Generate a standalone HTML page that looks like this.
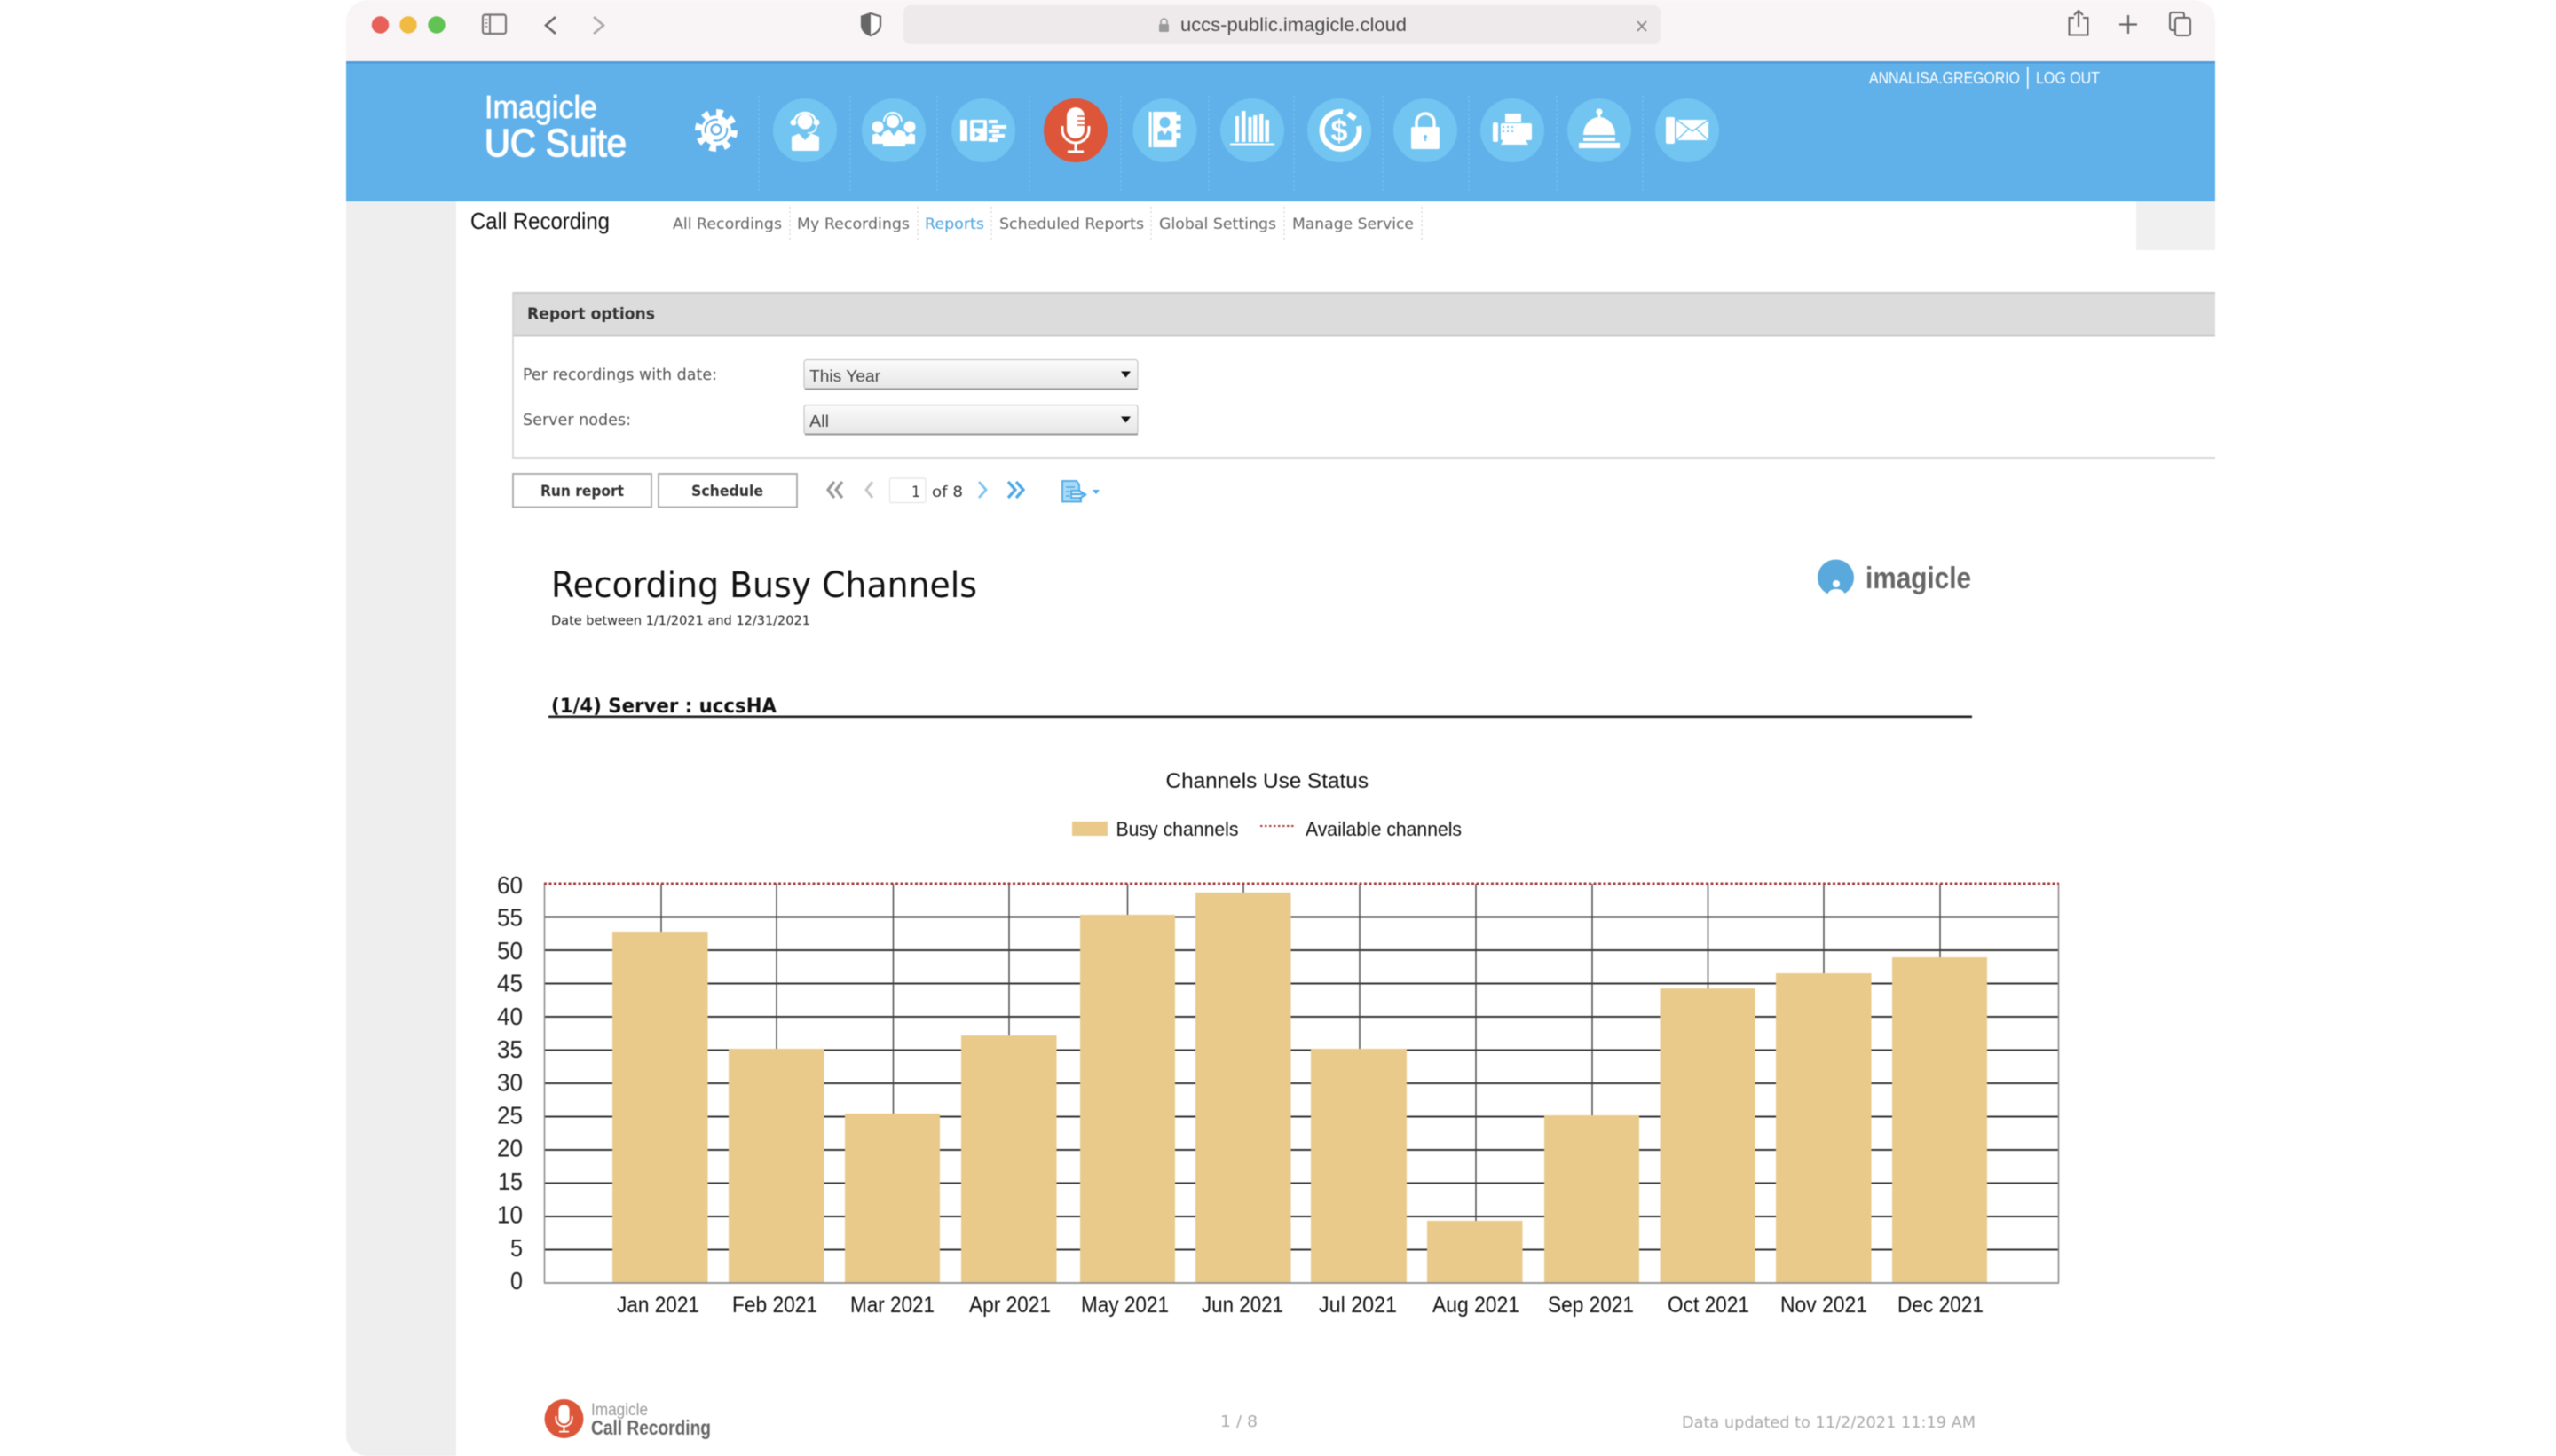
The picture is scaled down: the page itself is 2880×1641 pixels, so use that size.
<!DOCTYPE html>
<html><head><meta charset="utf-8"><title>Call Recording</title>
<style>
html,body{margin:0;padding:0;background:#fff;width:2880px;height:1641px;overflow:hidden}
svg{display:block;filter:blur(.55px)}
.l{font-family:"Liberation Sans",Arial,sans-serif}
.d{font-family:"DejaVu Sans",Verdana,sans-serif}
</style></head><body>
<svg width="2880" height="1641" viewBox="0 0 2880 1641" xmlns="http://www.w3.org/2000/svg">
<defs>
<clipPath id="win"><rect x="390" y="0" width="2106" height="1641" rx="24"/></clipPath>
<linearGradient id="sel" x1="0" y1="0" x2="0" y2="1"><stop offset="0" stop-color="#fbfbfb"/><stop offset="1" stop-color="#e6e6e6"/></linearGradient>
</defs>
<g clip-path="url(#win)">
<rect x="390" y="0" width="2106" height="1641" fill="#fff"/>
<rect x="390" y="0" width="2106" height="69" fill="#f9f5f6"/>
<rect x="390" y="69" width="2106" height="158" fill="#60b1ea"/>
<rect x="390" y="69" width="2106" height="2.5" fill="#5198d6"/>
<rect x="390" y="227" width="124" height="1414" fill="#eeeeee"/>
<rect x="2407" y="227" width="89" height="55" fill="#f0f0f0"/>
</g>

<!-- browser chrome -->
<circle cx="428.5" cy="28" r="9.7" fill="#e8605a"/>
<circle cx="460" cy="28" r="9.7" fill="#efbb40"/>
<circle cx="492" cy="28" r="9.7" fill="#60c354"/>
<rect x="544" y="16.5" width="26" height="21.5" rx="2.5" fill="none" stroke="#777" stroke-width="2.2"/>
<path d="M552 17V38" stroke="#777" stroke-width="2"/>
<path d="M546.5 22h3M546.5 26h3M546.5 30h3" stroke="#888" stroke-width="1.6"/>
<path d="M626 19 L615 28.5 L626 38" fill="none" stroke="#666" stroke-width="2.6"/>
<path d="M669 19 L680 28.5 L669 38" fill="none" stroke="#aaa" stroke-width="2.6"/>
<path d="M981 15 L992 18.5 V28 Q992 36 981 40 Q971 36 971 28 V18.5 Z" fill="#fff" stroke="#666" stroke-width="2.2"/>
<path d="M981 15 L971 18.5 V28 Q971 36 981 40 Z" fill="#666"/>
<rect x="1018" y="6" width="853" height="44" rx="8" fill="#eeeaec"/>
<rect x="1306" y="27" width="11" height="9" rx="1.5" fill="#9a9a9a"/>
<path d="M1308 27v-2.5a3.5 3.5 0 0 1 7 0V27" fill="none" stroke="#9a9a9a" stroke-width="1.6"/>
<text class="l" x="1330" y="35" font-size="21" fill="#4a4a4a" textLength="255" lengthAdjust="spacingAndGlyphs">uccs-public.imagicle.cloud</text>
<path d="M1845 24 L1855 35 M1855 24 L1845 35" stroke="#888" stroke-width="1.8"/>
<path d="M2337 20h-5.5v19.5h21V20H2347" fill="none" stroke="#666" stroke-width="2"/>
<path d="M2342 30V12 M2337 17l5-5 5 5" fill="none" stroke="#666" stroke-width="2"/>
<path d="M2398 17V38 M2388 27.500h20" stroke="#666" stroke-width="2.2"/>
<rect x="2445" y="14" width="16" height="20" rx="2.500" fill="none" stroke="#666" stroke-width="2"/>
<rect x="2451" y="20" width="17" height="20" rx="2.500" fill="#f9f5f6" stroke="#666" stroke-width="2"/>

<!-- header -->
<text class="l" x="546" y="133" font-size="36" fill="#fff" stroke="#fff" stroke-width=".7" textLength="127" lengthAdjust="spacingAndGlyphs">Imagicle</text>
<text class="l" x="546" y="176" font-size="44" fill="#fff" stroke="#fff" stroke-width="1.500" textLength="160" lengthAdjust="spacingAndGlyphs">UC Suite</text>
<text class="l" x="2106" y="94" font-size="18" fill="#fff" textLength="170" lengthAdjust="spacingAndGlyphs">ANNALISA.GREGORIO</text>
<rect x="2284" y="75" width="1.6" height="25" fill="#fff"/>
<text class="l" x="2294" y="94" font-size="18" fill="#fff" textLength="72" lengthAdjust="spacingAndGlyphs">LOG OUT</text>

<path d="M855 108V215M958 108V215M1056 108V215M1160 108V215M1263 108V215M1362 108V215M1458 108V215M1558 108V215M1655 108V215M1754 108V215M1851 108V215" stroke="#86c4ee" stroke-width="1" stroke-dasharray="2 3"/>

<!-- gear -->
<g transform="translate(807 147)">
<circle r="17" fill="#fff"/>
<circle r="20" fill="none" stroke="#fff" stroke-width="8" stroke-dasharray="7.300 8.400"/>
<circle r="5.500" cx="0" cy="-1" fill="none" stroke="#60b1ea" stroke-width="2.200"/>
<path d="M-12 3 A12 12 0 0 1 2 -12 M12 -3 A12 12 0 0 1 -3 11" fill="none" stroke="#60b1ea" stroke-width="2"/>
</g>
<!-- agent -->
<g transform="translate(907 147)">
<circle r="36" fill="#72c5f0"/>
<g fill="#fff">
<circle cy="-10" r="8.500"/>
<path d="M-12 -9 a12 11 0 0 1 24 0" fill="none" stroke="#fff" stroke-width="2.500"/>
<circle cx="-13" cy="-9" r="3.500"/><circle cx="13" cy="-9" r="3.500"/>
<path d="M13 -6 q0 9 -10 9" fill="none" stroke="#fff" stroke-width="1.500"/>
<path d="M-15 7 L-7 3.500 L0 11 L7 3.500 L16 7 V21 Q16 23 14 23 H-13 Q-15 23 -15 21Z"/>
</g></g>
<!-- team -->
<g transform="translate(1007 147)">
<circle r="36" fill="#72c5f0"/>
<g fill="#fff">
<circle cx="-1" cy="-10" r="7"/>
<path d="M-11 -10 a10 10 0 0 1 20 0" fill="none" stroke="#fff" stroke-width="2"/>
<circle cx="-18" cy="-4" r="6.500"/><circle cx="18" cy="-4" r="6.500"/>
<path d="M-24 5 L-19 3 L-15 7 L-12 4 V15 H-24Z"/>
<path d="M24 5 L19 3 L15 7 L13 4 V15 H24Z"/>
<path d="M-12 2 L-5 -1 L0 6 L5 -1 L13 2 V18 H-12Z"/>
</g></g>
<!-- flow -->
<g transform="translate(1108 147)">
<circle r="36" fill="#72c5f0"/>
<g fill="#fff">
<rect x="-26" y="-12" width="8" height="24"/>
<rect x="-15" y="-12" width="19" height="24" rx="2"/>
<path d="M6 -12h10v4h-10zM10 -6h16v4h-16zM6 -1h12v4h-12zM10 4h14v4h-14zM6 9h10v4h-10z"/>
</g>
<rect x="-11" y="-8.500" width="11" height="6" fill="#72c5f0"/>
<path d="M-9.500 1 L-3.500 4.500 L-9.500 8Z" fill="#72c5f0"/>
</g>
<!-- mic -->
<g transform="translate(1212 147)">
<circle r="36" fill="#dd5639"/>
<rect x="-10" y="-26" width="20" height="35" rx="10" fill="#fff"/>
<path d="M2 -16h8M2 -11h8M2 -6h8" stroke="#dd5639" stroke-width="1.500"/>
<path d="M-15 -5 V-1 A15 15 0 0 0 15 -1 V-5" fill="none" stroke="#fff" stroke-width="3"/>
<path d="M0 14V23 M-9 24H9" stroke="#fff" stroke-width="3"/>
</g>
<!-- address book -->
<g transform="translate(1312.500 147)">
<circle r="36" fill="#72c5f0"/>
<path d="M-18 -21H13V-17H18V-11H13V-7H18V-1H13V3H18V9H13V19H-18Z" fill="#fff"/>
<path d="M-14 -21V19" stroke="#72c5f0" stroke-width="1.500"/>
<circle cx="0" cy="-9" r="6" fill="#72c5f0"/>
<path d="M-8 2 L-3 0 L0 5 L3 0 L8 2 V11 H-8Z" fill="#72c5f0"/>
</g>
<!-- bars -->
<g transform="translate(1411 147)">
<circle r="36" fill="#72c5f0"/>
<path d="M-19 -16h4V13H-19zM-12 -22h4.500V13H-12zM-4.500 -15h4V13H-4.500zM1 -17h4.500V13H1zM8 -19h4.500V13H8zM14.500 -12h4.500V13H14.500z" fill="#fff"/>
<rect x="-25" y="14.500" width="50" height="2" fill="#fff"/>
</g>
<!-- dollar -->
<g transform="translate(1509 147)">
<circle r="36" fill="#72c5f0"/>
<path d="M4 -21 A21 21 0 1 0 22 -5 M10 -19 L18 -13" fill="none" stroke="#fff" stroke-width="6"/>
<text class="l" x="0" y="12" font-size="34" font-weight="700" fill="#fff" text-anchor="middle">$</text>
</g>
<!-- lock -->
<g transform="translate(1606 147)">
<circle r="36" fill="#72c5f0"/>
<path d="M-10 -4V-9A10 10 0 0 1 10 -9V-4" fill="none" stroke="#fff" stroke-width="3.500"/>
<rect x="-16" y="-4" width="32" height="25" rx="2" fill="#fff"/>
<circle cy="7" r="2" fill="#72c5f0"/><rect x="-1" y="7" width="2" height="5" fill="#72c5f0"/>
</g>
<!-- fax -->
<g transform="translate(1704 147)">
<circle r="36" fill="#72c5f0"/>
<g fill="#fff">
<rect x="-22" y="-9" width="6" height="22" rx="2"/>
<rect x="-8" y="-19" width="18" height="10"/>
<rect x="-13" y="-8" width="35" height="19" rx="2"/>
<path d="M-10 11H15L18 16H-13Z"/>
</g>
<path d="M-11 -5h2v2h-2zM-6 -5h2v2h-2zM-1 -5h2v2h-2zM-11 0h2v2h-2zM-6 0h2v2h-2zM-1 0h2v2h-2z" fill="#72c5f0"/>
</g>
<!-- bell -->
<g transform="translate(1802 147)">
<circle r="36" fill="#72c5f0"/>
<g fill="#fff">
<circle cx="0" cy="-21" r="3.500"/><rect x="-1.500" y="-21" width="3" height="6"/>
<path d="M-18 5 A18 20 0 0 1 18 5Z"/>
<rect x="-18" y="8" width="36" height="4"/>
<rect x="-23" y="14" width="46" height="6"/>
</g></g>
<!-- mail -->
<g transform="translate(1901 147)">
<circle r="36" fill="#72c5f0"/>
<rect x="-24" y="-15" width="10" height="30" rx="2" fill="#fff"/>
<rect x="-12" y="-12" width="36" height="23" fill="#fff"/>
<path d="M-12 -12 L6 1 L24 -12 M-12 11 L2 -2 M24 11 L10 -2" fill="none" stroke="#72c5f0" stroke-width="1.500"/>
</g>

<!-- sub nav -->
<text class="l" x="530" y="258" font-size="26" fill="#111" textLength="157" lengthAdjust="spacingAndGlyphs">Call Recording</text>
<g class="d" font-size="16.500" fill="#666">
<text x="758" y="258" textLength="123" lengthAdjust="spacingAndGlyphs">All Recordings</text>
<text x="898" y="258" textLength="127" lengthAdjust="spacingAndGlyphs">My Recordings</text>
<text x="1042" y="258" fill="#4aa3df" textLength="67" lengthAdjust="spacingAndGlyphs">Reports</text>
<text x="1126" y="258" textLength="163" lengthAdjust="spacingAndGlyphs">Scheduled Reports</text>
<text x="1306" y="258" textLength="132" lengthAdjust="spacingAndGlyphs">Global Settings</text>
<text x="1456" y="258" textLength="137" lengthAdjust="spacingAndGlyphs">Manage Service</text>
</g>
<path d="M890 233V270M1034 233V270M1117 233V270M1297 233V270M1447 233V270M1602 233V270" stroke="#ccc" stroke-width="1" stroke-dasharray="2 3"/>

<!-- report options -->
<rect x="577.500" y="329" width="1918.500" height="50" fill="#dcdcdc"/>
<path d="M577.500 330H2496M577.500 378.500H2496" stroke="#cbcbcb" stroke-width="2"/>
<path d="M578 329V516H2496" fill="none" stroke="#d4d4d4" stroke-width="1.800"/>
<text class="d" x="594" y="359.500" font-size="17.500" font-weight="700" fill="#333" textLength="144" lengthAdjust="spacingAndGlyphs">Report options</text>
<text class="d" x="589" y="428" font-size="17.500" fill="#555" textLength="219" lengthAdjust="spacingAndGlyphs">Per recordings with date:</text>
<text class="d" x="589" y="479" font-size="17.500" fill="#555" textLength="122" lengthAdjust="spacingAndGlyphs">Server nodes:</text>
<rect x="906" y="405.500" width="376" height="33" rx="3" fill="url(#sel)" stroke="#bcbcbc"/>
<path d="M907 438.500H1282" stroke="#999" stroke-width="2"/>
<text class="l" x="912" y="430" font-size="18" fill="#444" textLength="80" lengthAdjust="spacingAndGlyphs">This Year</text>
<path d="M1263 418.500H1274L1268.500 425.500Z" fill="#111"/>
<rect x="906" y="456.500" width="376" height="33" rx="3" fill="url(#sel)" stroke="#bcbcbc"/>
<path d="M907 489.500H1282" stroke="#999" stroke-width="2"/>
<text class="l" x="912" y="481" font-size="18" fill="#444" textLength="22" lengthAdjust="spacingAndGlyphs">All</text>
<path d="M1263 469.500H1274L1268.500 476.500Z" fill="#111"/>

<!-- buttons -->
<rect x="578" y="534" width="156" height="37.500" fill="#fff" stroke="#a8a8a8" stroke-width="1.800"/>
<rect x="742" y="534" width="156" height="37.500" fill="#fff" stroke="#a8a8a8" stroke-width="1.800"/>
<text class="d" x="609" y="559" font-size="16.500" font-weight="700" fill="#333" textLength="94" lengthAdjust="spacingAndGlyphs">Run report</text>
<text class="d" x="779" y="559" font-size="16.500" font-weight="700" fill="#333" textLength="81" lengthAdjust="spacingAndGlyphs">Schedule</text>
<path d="M940 543 L933 552 L940 561 M949 543 L942 552 L949 561" fill="none" stroke="#999" stroke-width="3.200"/>
<path d="M983 543 L976 552 L983 561" fill="none" stroke="#c4c4c4" stroke-width="2.800"/>
<rect x="1002.500" y="539" width="40.500" height="27.500" rx="2" fill="#fff" stroke="#e4e4e4" stroke-width="1.200"/>
<text class="d" x="1027" y="560" font-size="17" fill="#333" textLength="10" lengthAdjust="spacingAndGlyphs">1</text>
<text class="d" x="1050" y="560" font-size="17" fill="#333" textLength="35" lengthAdjust="spacingAndGlyphs">of 8</text>
<path d="M1103 543 L1111 552 L1103 561" fill="none" stroke="#7cc4ef" stroke-width="2.800"/>
<path d="M1136 543 L1144 552 L1136 561 M1145 543 L1153 552 L1145 561" fill="none" stroke="#4aa8e8" stroke-width="3.200"/>
<path d="M1197 542H1213L1216 546V553H1207V561H1218V565.500H1197Z" fill="#a9daf5" stroke="#4aa8e8" stroke-width="1.800"/>
<path d="M1201 549h10M1201 554h4M1201 559h4" stroke="#4aa8e8" stroke-width="1.500"/>
<path d="M1208 557H1220M1216 553L1223 557.500L1216 562" fill="none" stroke="#4aa8e8" stroke-width="2.200"/>
<path d="M1231 552H1239L1235 557Z" fill="#4aa8e8"/>

<!-- report header -->
<text class="d" x="621" y="673" font-size="40" fill="#111" textLength="480" lengthAdjust="spacingAndGlyphs">Recording Busy Channels</text>
<text class="d" x="621" y="704" font-size="14.500" fill="#222" textLength="292" lengthAdjust="spacingAndGlyphs">Date between 1/1/2021 and 12/31/2021</text>
<text class="d" x="621" y="803" font-size="22" font-weight="700" fill="#111" textLength="254" lengthAdjust="spacingAndGlyphs">(1/4) Server : uccsHA</text>
<rect x="618" y="806.500" width="1604" height="2.600" fill="#222"/>
<!-- imagicle logo -->
<circle cx="2068.500" cy="651" r="20.500" fill="#5aa9dc"/>
<circle cx="2069" cy="658" r="4" fill="#fff"/>
<path d="M2059 673 Q2059 664 2069 664 Q2079 664 2079 673Z" fill="#fff"/>
<text class="l" x="2102" y="663" font-size="34" font-weight="700" fill="#666" textLength="119" lengthAdjust="spacingAndGlyphs">imagicle</text>

<!-- chart title -->
<text class="l" x="1313.500" y="888" font-size="24" fill="#111" textLength="228.500" lengthAdjust="spacingAndGlyphs">Channels Use Status</text>
<rect x="1208" y="926" width="40" height="16" fill="#e9ca8b"/>
<text class="l" x="1257.500" y="942" font-size="22.500" fill="#111" textLength="138" lengthAdjust="spacingAndGlyphs">Busy channels</text>
<path d="M1420 931H1460" stroke="#a33c3c" stroke-width="2" stroke-dasharray="2.500 2.500"/>
<text class="l" x="1471" y="942" font-size="22.500" fill="#111" textLength="176" lengthAdjust="spacingAndGlyphs">Available channels</text>

<!-- chart grid -->
<path d="M613.500 1033.500H2319.500M613.500 1071H2319.500M613.500 1108.500H2319.500M613.500 1146H2319.500M613.500 1183.500H2319.500M613.500 1221H2319.500M613.500 1258.500H2319.500M613.500 1296H2319.500M613.500 1333.500H2319.500M613.500 1371H2319.500M613.500 1408.500H2319.500" stroke="#333" stroke-width="2"/>
<path d="M745 996V1446M875 996V1446M1006.500 996V1446M1137 996V1446M1270.500 996V1446M1401 996V1446M1532 996V1446M1663 996V1446M1794 996V1446M1924.500 996V1446M2055 996V1446M2186 996V1446" stroke="#444" stroke-width="1.400"/>
<path d="M613.500 996V1446M2319.500 996V1446" stroke="#888" stroke-width="1.500"/>
<path d="M613 1446H2320" stroke="#999" stroke-width="2"/>
<path d="M613 996H2320" stroke="#a33c3c" stroke-width="3" stroke-dasharray="3 2.500"/>

<!-- bars -->
<g fill="#e9ca8b">
<rect x="690" y="1050" width="107.500" height="395"/>
<rect x="821" y="1182" width="107.500" height="263"/>
<rect x="952" y="1255" width="107" height="190"/>
<rect x="1083" y="1167" width="107.500" height="278"/>
<rect x="1217" y="1031" width="107" height="414"/>
<rect x="1347" y="1006" width="107.500" height="439"/>
<rect x="1477" y="1182" width="108" height="263"/>
<rect x="1608" y="1376" width="107.500" height="69"/>
<rect x="1740" y="1257" width="107" height="188"/>
<rect x="1870.500" y="1114" width="107" height="331"/>
<rect x="2001" y="1097" width="107.500" height="348"/>
<rect x="2132" y="1079" width="107" height="366"/>
</g>

<!-- y labels -->
<g class="l" font-size="28" fill="#222" text-anchor="end">
<text x="589" y="1007" textLength="29" lengthAdjust="spacingAndGlyphs">60</text>
<text x="589" y="1043.500" textLength="29" lengthAdjust="spacingAndGlyphs">55</text>
<text x="589" y="1081" textLength="29" lengthAdjust="spacingAndGlyphs">50</text>
<text x="589" y="1117.500" textLength="29" lengthAdjust="spacingAndGlyphs">45</text>
<text x="589" y="1155" textLength="29" lengthAdjust="spacingAndGlyphs">40</text>
<text x="589" y="1192" textLength="29" lengthAdjust="spacingAndGlyphs">35</text>
<text x="589" y="1229.500" textLength="29" lengthAdjust="spacingAndGlyphs">30</text>
<text x="589" y="1266.500" textLength="29" lengthAdjust="spacingAndGlyphs">25</text>
<text x="589" y="1303.500" textLength="29" lengthAdjust="spacingAndGlyphs">20</text>
<text x="589" y="1341" textLength="28" lengthAdjust="spacingAndGlyphs">15</text>
<text x="589" y="1378.500" textLength="29" lengthAdjust="spacingAndGlyphs">10</text>
<text x="589" y="1416" textLength="14" lengthAdjust="spacingAndGlyphs">5</text>
<text x="589" y="1453" textLength="14" lengthAdjust="spacingAndGlyphs">0</text>
</g>
<!-- x labels -->
<g class="l" font-size="25" fill="#111">
<text x="695" y="1479" textLength="93" lengthAdjust="spacingAndGlyphs">Jan 2021</text>
<text x="825" y="1479" textLength="96" lengthAdjust="spacingAndGlyphs">Feb 2021</text>
<text x="958" y="1479" textLength="95" lengthAdjust="spacingAndGlyphs">Mar 2021</text>
<text x="1092" y="1479" textLength="92" lengthAdjust="spacingAndGlyphs">Apr 2021</text>
<text x="1218" y="1479" textLength="99" lengthAdjust="spacingAndGlyphs">May 2021</text>
<text x="1354" y="1479" textLength="92" lengthAdjust="spacingAndGlyphs">Jun 2021</text>
<text x="1486" y="1479" textLength="88" lengthAdjust="spacingAndGlyphs">Jul 2021</text>
<text x="1614" y="1479" textLength="98" lengthAdjust="spacingAndGlyphs">Aug 2021</text>
<text x="1744" y="1479" textLength="97" lengthAdjust="spacingAndGlyphs">Sep 2021</text>
<text x="1879" y="1479" textLength="92" lengthAdjust="spacingAndGlyphs">Oct 2021</text>
<text x="2006" y="1479" textLength="98" lengthAdjust="spacingAndGlyphs">Nov 2021</text>
<text x="2138" y="1479" textLength="97" lengthAdjust="spacingAndGlyphs">Dec 2021</text>
</g>

<!-- footer -->
<g transform="translate(635.500 1599) scale(.61)">
<circle r="36" fill="#dd5639"/>
<rect x="-10" y="-26" width="20" height="35" rx="10" fill="#fff"/>
<path d="M-15 -5 V-1 A15 15 0 0 0 15 -1 V-5" fill="none" stroke="#fff" stroke-width="3"/>
<path d="M0 14V23 M-9 24H9" stroke="#fff" stroke-width="3"/>
</g>
<text class="l" x="666" y="1595" font-size="19" fill="#999" textLength="64" lengthAdjust="spacingAndGlyphs">Imagicle</text>
<text class="l" x="666" y="1617" font-size="23" font-weight="700" fill="#666" textLength="135" lengthAdjust="spacingAndGlyphs">Call Recording</text>
<text class="d" x="1375" y="1608" font-size="17.500" fill="#aaa" textLength="42" lengthAdjust="spacingAndGlyphs">1 / 8</text>
<text class="d" x="1895" y="1609" font-size="17.500" fill="#aaa" textLength="331" lengthAdjust="spacingAndGlyphs">Data updated to 11/2/2021 11:19 AM</text>
</svg>
</body></html>
